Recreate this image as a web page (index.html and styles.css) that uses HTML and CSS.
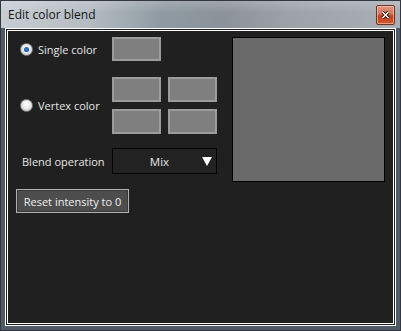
FILE: index.html
```html
<!DOCTYPE html>
<html lang="en">
<head>
  <meta charset="UTF-8">
  <title>Edit color blend</title>
  <link rel="stylesheet" href="styles.css">
</head>
<body>
  <div class="window">
    <!-- Title bar -->
    <div class="titlebar">
      <span class="title">Edit color blend</span>
      <div class="close-btn">
        <svg width="9" height="8" viewBox="0 0 9 8">
          <path d="M1.5 1 L7.5 7 M7.5 1 L1.5 7" stroke="#2a1410" stroke-width="3.2"/>
          <path d="M1.5 1 L7.5 7 M7.5 1 L1.5 7" stroke="#ffffff" stroke-width="1.4"/>
        </svg>
      </div>
    </div>

    <!-- Client area with double white line -->
    <div class="client">
      <div class="content">
        <div class="left-col">
          <!-- Single color -->
          <div class="row row-single">
            <label class="option">
              <span class="radio checked"></span>
              <span class="option-text">Single color</span>
            </label>
            <div class="swatch"></div>
          </div>
          <!-- Vertex color -->
          <div class="row row-vertex">
            <label class="option">
              <span class="radio"></span>
              <span class="option-text">Vertex color</span>
            </label>
            <div class="swatch-grid">
              <div class="swatch"></div>
              <div class="swatch"></div>
              <div class="swatch"></div>
              <div class="swatch"></div>
            </div>
          </div>
          <!-- Blend operation -->
          <div class="row row-blend">
            <span class="blend-label">Blend operation</span>
            <div class="dropdown">
              <span class="dropdown-value">Mix</span>
              <span class="dropdown-arrow"></span>
            </div>
          </div>
          <button class="reset-btn">Reset intensity to 0</button>
        </div>
        <div class="preview"></div>
      </div>
    </div>
  </div>
</body>
</html>
```

FILE: styles.css
```css
body {
  margin: 0;
  font-family: "Open Sans", "Noto Sans", sans-serif;
  font-size: 11px;
}
.window {
  width: 401px;
  height: 331px;
  box-sizing: border-box;
  border: 1px solid #33383e;
  background: #4f5a66;
  display: flex;
  flex-direction: column;
}
/* Title bar */
.titlebar {
  height: 27px;
  flex-shrink: 0;
  display: flex;
  align-items: center;
  padding-left: 7px;
  background:
    linear-gradient(180deg, rgba(255, 255, 255, 0.18) 0%, rgba(255, 255, 255, 0) 45%),
    linear-gradient(90deg, #c7cdd2 0%, #b4bcc2 22%, #8f9ba3 40%, #8b9299 56%, #9da2a8 72%, #aaafb5 100%);
}
.title {
  font-size: 12px;
  color: #151515;
  margin-top: -1px;
}
.close-btn {
  margin-left: auto;
  margin-right: 5px;
  margin-top: 1px;
  width: 17px;
  height: 18px;
  border: 1px solid #6d3325;
  border-radius: 2px;
  box-shadow: inset 0 0 0 1px rgba(255, 220, 200, 0.55);
  background: linear-gradient(180deg, #e0957f 0%, #d4745a 45%, #c2401d 55%, #d0582f 100%);
  display: flex;
  align-items: center;
  justify-content: center;
}
/* Client area: white line, dark gap, white line */
.client {
  flex: 1;
  margin: 0 4px 4px 4px;
  border: 1px solid #ffffff;
  padding: 1px;
  background: #202020;
  display: flex;
}
.content {
  flex: 1;
  border: 1px solid #ffffff;
  background: #202020;
  display: flex;
  padding: 6px 8px;
  color: #e6e6e6;
}
.left-col {
  width: 216px;
  display: flex;
  flex-direction: column;
}
.row {
  display: flex;
  align-items: center;
}
.option {
  width: 96px;
  padding-left: 4px;
  box-sizing: border-box;
  display: flex;
  align-items: center;
  gap: 5px;
}
.radio {
  width: 11px;
  height: 11px;
  border-radius: 50%;
  border: 1px solid #7a7a7a;
  background: radial-gradient(circle at 50% 40%, #ffffff 0%, #e6e6e6 50%, #bcbcbc 100%);
  position: relative;
  flex-shrink: 0;
}
.radio.checked::after {
  content: "";
  position: absolute;
  left: 3px;
  top: 3px;
  width: 5px;
  height: 5px;
  border-radius: 50%;
  background: radial-gradient(circle at 45% 40%, #3d86d8 0%, #0d4fa6 70%, #0a3d85 100%);
}
.swatch {
  width: 45px;
  height: 20px;
  border: 2px solid #9c9c9c;
  background: #7f7f7f;
}
.row-vertex {
  margin-top: 16px;
}
.swatch-grid {
  display: grid;
  grid-template-columns: 49px 49px;
  gap: 7px;
}
.swatch-grid .swatch {
  height: 21px;
}
.row-blend {
  margin-top: 14px;
}
.blend-label {
  width: 96px;
  padding-left: 6px;
  box-sizing: border-box;
}
.dropdown {
  width: 105px;
  height: 26px;
  box-sizing: border-box;
  border: 1px solid #050505;
  background: #222222;
  display: flex;
  align-items: center;
  padding-right: 4px;
}
.dropdown-value {
  flex: 1;
  text-align: center;
  padding-left: 4px;
  font-size: 11.5px;
}
.dropdown-arrow {
  width: 0;
  height: 0;
  border-left: 5px solid transparent;
  border-right: 5px solid transparent;
  border-top: 9px solid #ffffff;
}
.reset-btn {
  margin-top: 15px;
  width: 113px;
  height: 24px;
  padding: 0;
  font: inherit;
  color: #f0f0f0;
  background: #4d4d4d;
  border: 1px solid #b0b0b0;
  box-shadow: inset 0 0 0 1px #3a3a3a;
}
.preview {
  width: 153px;
  height: 145px;
  box-sizing: border-box;
  border: 1px solid #000000;
  background: #6a6a6a;
}
```
